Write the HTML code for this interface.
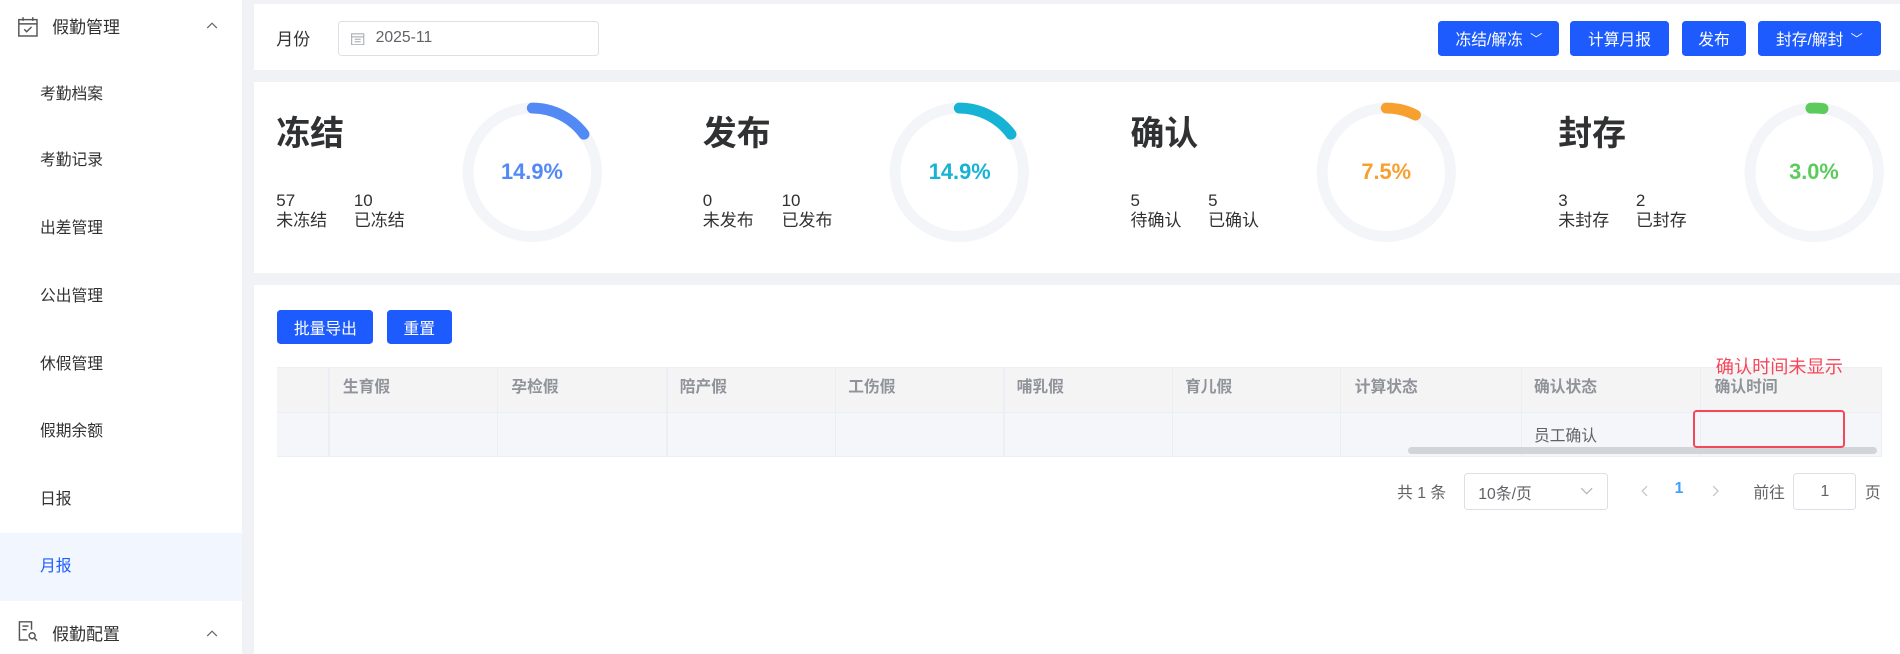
<!DOCTYPE html>
<html><head><meta charset="utf-8"><style>
*{margin:0;padding:0;box-sizing:border-box}
html,body{width:1900px;height:642px;overflow:hidden;background:#f0f2f5}
#w{position:absolute;left:0;top:0;width:1568px;height:540px;zoom:1.21173;font-family:"Liberation Sans","Noto Sans CJK SC",sans-serif;color:#303133}
.a{position:absolute;white-space:nowrap}
.side{left:0;top:0;width:200px;height:540px;background:#fff}
.mi{left:33px;font-size:13px;color:#303133;line-height:16px}
.card{background:#fff;left:210px;width:1358px}
.btn{background:#1d5bfe;color:#fff;border-radius:3px;font-size:13px;display:flex;align-items:center;justify-content:center;height:29px}
.tt{font-size:28px;font-weight:bold;color:#303133;line-height:32px}
.num{font-size:14px;line-height:16px;color:#303133}
.th{font-size:13px;font-weight:bold;color:#909399;line-height:16px}
.vl{position:absolute;width:1px;background:#ebeef5}
.pct{font-size:18px;font-weight:bold;text-align:center;width:116px;line-height:20px}
</style></head><body><div id="w">
<div class="a side"></div>
<svg class="a" style="left:14px;top:13px" width="18" height="18" viewBox="0 0 18 18" fill="none" stroke="#555" stroke-width="1.2"><rect x="1.5" y="3" width="15" height="13.5"/><line x1="1.5" y1="6.5" x2="16.5" y2="6.5"/><line x1="5" y1="1" x2="5" y2="4"/><line x1="13" y1="1" x2="13" y2="4"/><polyline points="6,11 8,13 12,9"/></svg>
<div class="a" style="left:43px;top:11px;font-size:14px">假勤管理</div>
<svg class="a" style="left:170px;top:18px" width="10" height="6" viewBox="0 0 10 6" fill="none" stroke="#666"><polyline points="1,5 5,1 9,5"/></svg>
<div class="a mi" style="top:70px">考勤档案</div>
<div class="a mi" style="top:125px">考勤记录</div>
<div class="a mi" style="top:181px">出差管理</div>
<div class="a mi" style="top:237px">公出管理</div>
<div class="a mi" style="top:293px">休假管理</div>
<div class="a mi" style="top:348px">假期余额</div>
<div class="a mi" style="top:404px">日报</div>
<div class="a" style="left:0;top:440px;width:200px;height:56px;background:#f2f7ff"></div>
<div class="a mi" style="top:460px;color:#1d5bfe">月报</div>
<svg class="a" style="left:14px;top:512px" width="18" height="18" viewBox="0 0 18 18" fill="none" stroke="#555" stroke-width="1.2"><path d="M12 8V1.5H2v15h7"/><line x1="4.5" y1="5" x2="9.5" y2="5"/><line x1="4.5" y1="8" x2="8" y2="8"/><circle cx="12.5" cy="13" r="2.5"/><line x1="14.3" y1="14.8" x2="16.5" y2="17"/></svg>
<div class="a" style="left:43px;top:512px;font-size:14px">假勤配置</div>
<svg class="a" style="left:170px;top:520px" width="10" height="6" viewBox="0 0 10 6" fill="none" stroke="#666"><polyline points="1,5 5,1 9,5"/></svg>

<div class="a card" style="top:3px;height:55px"></div>
<div class="a" style="left:228px;top:21px;font-size:14px">月份</div>
<div class="a" style="left:279px;top:17px;width:215px;height:29px;border:1px solid #dcdfe6;border-radius:3px"></div>
<svg class="a" style="left:290px;top:26px" width="11" height="11" viewBox="0 0 11 11" fill="none" stroke="#b0b3b8" stroke-width="1"><rect x="0.5" y="1.5" width="10" height="9"/><line x1="0.5" y1="4" x2="10.5" y2="4"/><line x1="3" y1="6" x2="8" y2="6"/><line x1="3" y1="8" x2="8" y2="8"/></svg>
<div class="a" style="left:310px;top:24px;font-size:13px;color:#606266">2025-11</div>
<div class="a btn" style="left:1187px;top:17px;width:100px">冻结/解冻 <span style="font-size:10px;margin-left:6px">﹀</span></div>
<div class="a btn" style="left:1296px;top:17px;width:81px">计算月报</div>
<div class="a btn" style="left:1388px;top:17px;width:53px">发布</div>
<div class="a btn" style="left:1451px;top:17px;width:101px">封存/解封 <span style="font-size:10px;margin-left:6px">﹀</span></div>

<div class="a card" style="top:68px;height:157px"></div>
<div class="a tt" style="left:228px;top:95px">冻结</div>
<div class="a num" style="left:228px;top:158px">57<br>未冻结</div>
<div class="a num" style="left:292px;top:158px">10<br>已冻结</div>
<div class="a tt" style="left:580px;top:95px">发布</div>
<div class="a num" style="left:580px;top:158px">0<br>未发布</div>
<div class="a num" style="left:645px;top:158px">10<br>已发布</div>
<div class="a tt" style="left:933px;top:95px">确认</div>
<div class="a num" style="left:933px;top:158px">5<br>待确认</div>
<div class="a num" style="left:997px;top:158px">5<br>已确认</div>
<div class="a tt" style="left:1286px;top:95px">封存</div>
<div class="a num" style="left:1286px;top:158px">3<br>未封存</div>
<div class="a num" style="left:1350px;top:158px">2<br>已封存</div>
<svg class="a" style="left:381px;top:84px" width="116" height="116"><circle cx="58" cy="58" r="53" fill="none" stroke="#f3f5f9" stroke-width="9"/><circle cx="58" cy="58" r="53" fill="none" stroke="#5389f5" stroke-width="9" stroke-linecap="round" stroke-dasharray="49.6 400" transform="rotate(-90 58 58)"/></svg>
<div class="a pct" style="left:381px;top:132px;color:#5389f5">14.9%</div>
<svg class="a" style="left:734px;top:84px" width="116" height="116"><circle cx="58" cy="58" r="53" fill="none" stroke="#f3f5f9" stroke-width="9"/><circle cx="58" cy="58" r="53" fill="none" stroke="#17b3d4" stroke-width="9" stroke-linecap="round" stroke-dasharray="49.6 400" transform="rotate(-90 58 58)"/></svg>
<div class="a pct" style="left:734px;top:132px;color:#17b3d4">14.9%</div>
<svg class="a" style="left:1086px;top:84px" width="116" height="116"><circle cx="58" cy="58" r="53" fill="none" stroke="#f3f5f9" stroke-width="9"/><circle cx="58" cy="58" r="53" fill="none" stroke="#f7a030" stroke-width="9" stroke-linecap="round" stroke-dasharray="25 400" transform="rotate(-90 58 58)"/></svg>
<div class="a pct" style="left:1086px;top:132px;color:#f7a030">7.5%</div>
<svg class="a" style="left:1439px;top:84px" width="116" height="116"><circle cx="58" cy="58" r="53" fill="none" stroke="#f3f5f9" stroke-width="9"/><circle cx="58" cy="58" r="53" fill="none" stroke="#5ccb5c" stroke-width="9" stroke-linecap="round" stroke-dasharray="10 400" transform="rotate(-93 58 58)"/></svg>
<div class="a pct" style="left:1439px;top:132px;color:#5ccb5c">3.0%</div>

<div class="a card" style="top:235px;height:305px"></div>
<div class="a btn" style="left:229px;top:256px;width:79px;height:28px">批量导出</div>
<div class="a btn" style="left:319px;top:256px;width:54px;height:28px">重置</div>
<div class="a" style="left:229px;top:303px;width:1323px;height:37px;background:#f4f4f5;border-top:1px solid #ebeef5"></div>
<div class="a" style="left:229px;top:340px;width:1323px;height:37px;background:#f5f6f9;border-top:1px solid #ebeef5;border-bottom:1px solid #ebeef5"></div>
<div class="vl" style="left:271px;top:303px;height:74px"></div>
<div class="vl" style="left:410px;top:303px;height:74px"></div>
<div class="vl" style="left:550px;top:303px;height:74px"></div>
<div class="vl" style="left:689px;top:303px;height:74px"></div>
<div class="vl" style="left:828px;top:303px;height:74px"></div>
<div class="vl" style="left:967px;top:303px;height:74px"></div>
<div class="vl" style="left:1106px;top:303px;height:74px"></div>
<div class="vl" style="left:1255px;top:303px;height:74px"></div>
<div class="vl" style="left:1403px;top:303px;height:74px"></div>
<div class="vl" style="left:1552px;top:303px;height:74px"></div>
<div class="a th" style="left:283px;top:312px">生育假</div>
<div class="a th" style="left:422px;top:312px">孕检假</div>
<div class="a th" style="left:561px;top:312px">陪产假</div>
<div class="a th" style="left:700px;top:312px">工伤假</div>
<div class="a th" style="left:839px;top:312px">哺乳假</div>
<div class="a th" style="left:978px;top:312px">育儿假</div>
<div class="a th" style="left:1118px;top:312px">计算状态</div>
<div class="a th" style="left:1266px;top:312px">确认状态</div>
<div class="a th" style="left:1415px;top:312px">确认时间</div>
<div class="a" style="left:1266px;top:349px;font-size:13px;color:#606266">员工确认</div>
<div class="a" style="left:1162px;top:369px;width:387px;height:6px;border-radius:3px;background:#d3d4d8"></div>
<div class="a" style="left:1397px;top:338px;width:126px;height:32px;border:2px solid #f5475a;border-radius:3px"></div>
<div class="a" style="left:1416px;top:291px;font-size:15px;color:#f5475a">确认时间未显示</div>

<div class="a" style="left:1153px;top:396px;font-size:13px;color:#606266">共 1 条</div>
<div class="a" style="left:1208px;top:390px;width:119px;height:31px;border:1px solid #dcdfe6;border-radius:3px"></div>
<div class="a" style="left:1220px;top:397px;font-size:13px;color:#606266">10条/页</div>
<svg class="a" style="left:1304px;top:402px" width="11" height="7" viewBox="0 0 11 7" fill="none" stroke="#b0b3b8"><polyline points="1,1 5.5,5.5 10,1"/></svg>
<svg class="a" style="left:1354px;top:400px" width="6" height="10" viewBox="0 0 6 10" fill="none" stroke="#c0c4cc"><polyline points="5,1 1,5 5,9"/></svg>
<div class="a" style="left:1382px;top:396px;font-size:13px;font-weight:bold;color:#409eff">1</div>
<svg class="a" style="left:1413px;top:400px" width="6" height="10" viewBox="0 0 6 10" fill="none" stroke="#c0c4cc"><polyline points="1,1 5,5 1,9"/></svg>
<div class="a" style="left:1447px;top:396px;font-size:13px;color:#606266">前往</div>
<div class="a" style="left:1480px;top:390px;width:52px;height:31px;border:1px solid #dcdfe6;border-radius:3px;text-align:center;line-height:29px;font-size:13px;color:#606266">1</div>
<div class="a" style="left:1539px;top:396px;font-size:13px;color:#606266">页</div>
</div></body></html>
